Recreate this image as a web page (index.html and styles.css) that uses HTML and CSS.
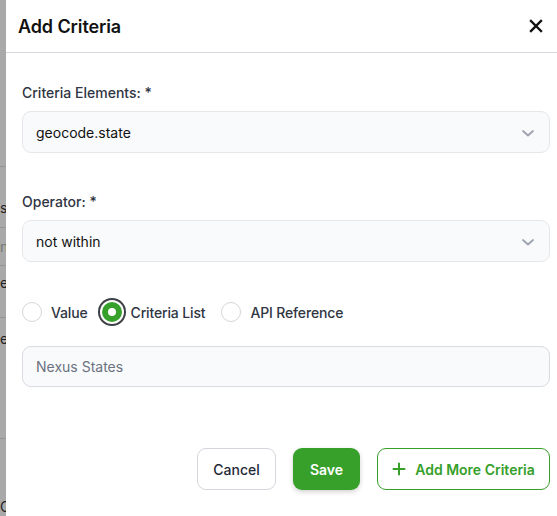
FILE: index.html
```html
<!DOCTYPE html>
<html>
<head>
<meta charset="utf-8">
<link rel="stylesheet" href="styles.css">
</head>
<body>
<div class="backdrop">
  <div class="bd-row bd-r1"></div>
  <div class="bd-row bd-r2"><span>sc</span></div>
  <div class="bd-row bd-r3"><span class="muted">n</span></div>
  <div class="bd-row bd-r4"><span>e</span></div>
  <div class="bd-row bd-r5"><span>e</span></div>
  <div class="bd-row bd-r6"></div>
  <div class="bd-row bd-r7"><span>C'</span></div>
</div>
<div class="modal">
  <div class="modal-header">
    <h2 class="title">Add Criteria</h2>
    <button class="close" aria-label="Close">
      <svg width="14" height="14" viewBox="0 0 14 14"><path d="M2 2 L12 12 M12 2 L2 12" stroke="#111" stroke-width="2.4" stroke-linecap="square"/></svg>
    </button>
  </div>
  <div class="modal-body">
    <label class="label">Criteria Elements: *</label>
    <div class="select">
      <span>geocode.state</span>
      <svg class="chev" width="14" height="10" viewBox="0 0 14 10"><path d="M2 3 L7 7.5 L12 3" fill="none" stroke="#9ca3af" stroke-width="1.8" stroke-linecap="round" stroke-linejoin="round"/></svg>
    </div>
    <label class="label label-op">Operator: *</label>
    <div class="select">
      <span>not within</span>
      <svg class="chev" width="14" height="10" viewBox="0 0 14 10"><path d="M2 3 L7 7.5 L12 3" fill="none" stroke="#9ca3af" stroke-width="1.8" stroke-linecap="round" stroke-linejoin="round"/></svg>
    </div>
    <div class="radios">
      <div class="radio-item"><span class="radio"></span><span class="radio-label">Value</span></div>
      <div class="radio-item checked-item"><span class="radio checked"></span><span class="radio-label">Criteria List</span></div>
      <div class="radio-item"><span class="radio"></span><span class="radio-label">API Reference</span></div>
    </div>
    <div class="input"><span class="placeholder">Nexus States</span></div>
    <div class="footer">
      <button class="btn btn-cancel">Cancel</button>
      <button class="btn btn-save">Save</button>
      <button class="btn btn-add">
        <svg width="14" height="14" viewBox="0 0 14 14"><path d="M7 1.5 V12.5 M1.5 7 H12.5" stroke="#36a02a" stroke-width="2" stroke-linecap="round"/></svg>
        <span>Add More Criteria</span>
      </button>
    </div>
  </div>
</div>
</body>
</html>
```
FILE: styles.css
```css
* { box-sizing: border-box; }
html, body { margin: 0; padding: 0; }
body {
  width: 557px;
  height: 516px;
  display: flex;
  font-family: Inter, "Noto Sans", Arial, sans-serif;
  background: #fff;
  overflow: hidden;
}
.backdrop {
  width: 6px;
  flex: none;
  background: #a9a9a9;
  overflow: hidden;
  display: flex;
  flex-direction: column;
  font-size: 14px;
  color: #222;
}
.bd-row {
  border-bottom: 1px solid #949494;
  white-space: nowrap;
  display: flex;
  align-items: center;
  justify-content: flex-end;
  direction: rtl;
}
.bd-row span { direction: ltr; }
.bd-r1 { height: 167px; }
.bd-r2 { height: 61px; padding-top: 20px; }
.bd-r3 { height: 38px; }
.bd-r4 { height: 52px; align-items: flex-start; padding-top: 8px; }
.bd-r5 { height: 121px; align-items: flex-start; padding-top: 12px; }
.bd-r6 { height: 58px; border-bottom: none; }
.bd-r7 { flex: 1; border-bottom: none; }
.muted { color: #777; }
.modal {
  flex: 1;
  background: #fff;
  display: flex;
  flex-direction: column;
}
.modal-header {
  height: 53px;
  flex: none;
  border-bottom: 1px solid #d7d8dd;
  display: flex;
  align-items: center;
  justify-content: space-between;
  padding: 0 14px 0 12px;
}
.title {
  margin: 0;
  font-size: 18px;
  font-weight: 600;
  color: #111;
  letter-spacing: -0.1px;
}
.close {
  border: none;
  background: none;
  padding: 0;
  width: 14px;
  height: 14px;
  display: flex;
}
.modal-body {
  padding: 30px 7px 0 16px;
  display: flex;
  flex-direction: column;
}
.label {
  display: block;
  font-size: 14px;
  line-height: 20px;
  font-weight: 500;
  color: #2f3542;
  margin-bottom: 8px;
}
.label-op { margin-top: 39px; }
.select {
  height: 42px;
  border: 1px solid #e6e7ea;
  border-radius: 9px;
  background: #f9fafb;
  display: flex;
  align-items: center;
  justify-content: space-between;
  padding: 0 14px 0 13px;
  font-size: 14px;
  color: #111;
}
.chev { margin-top: 1px; }
.radios {
  display: flex;
  align-items: center;
  margin-top: 37px;
  height: 26px;
}
.radio-item {
  display: flex;
  align-items: center;
  margin-right: 11px;
}
.radio {
  width: 20px;
  height: 20px;
  border-radius: 50%;
  border: 1px solid #d3d6db;
  background: #fff;
  flex: none;
  position: relative;
}
.radio.checked {
  border: none;
  background: #36a02a;
  box-shadow: 0 0 0 2px #fff, 0 0 0 4px #3d3f45;
  margin-left: 3px;
}
.radio.checked::after {
  content: "";
  position: absolute;
  left: 6px;
  top: 6px;
  width: 8px;
  height: 8px;
  border-radius: 50%;
  background: #fff;
}
.radio-label {
  font-size: 14px;
  font-weight: 500;
  color: #2f3542;
  margin-left: 9px;
  letter-spacing: -0.15px;
}
.checked-item { margin-right: 16px; }
.checked-item .radio-label { margin-left: 9px; }
.input {
  margin-top: 21px;
  height: 41px;
  border: 1px solid #d9dbe0;
  border-radius: 9px;
  background: #f9fafb;
  display: flex;
  align-items: center;
  padding: 0 13px;
  font-size: 14px;
}
.placeholder { color: #6b7280; }
.footer {
  margin-top: 61px;
  display: flex;
  justify-content: flex-end;
  gap: 17px;
}
.btn {
  height: 42px;
  border-radius: 9px;
  font-family: inherit;
  font-size: 14px;
  font-weight: 600;
  display: flex;
  align-items: center;
  justify-content: center;
  padding: 0;
  cursor: pointer;
}
.btn-cancel {
  width: 79px;
  background: #fff;
  border: 1px solid #d4d6dc;
  color: #1f2937;
  font-weight: 500;
}
.btn-save {
  width: 67px;
  background: #36a02a;
  border: none;
  color: #fff;
  box-shadow: 0 2px 5px rgba(0,0,0,0.18);
}
.btn-add {
  width: 173px;
  background: #fff;
  border: 1px solid #36a02a;
  color: #36a02a;
  gap: 9px;
}
```
